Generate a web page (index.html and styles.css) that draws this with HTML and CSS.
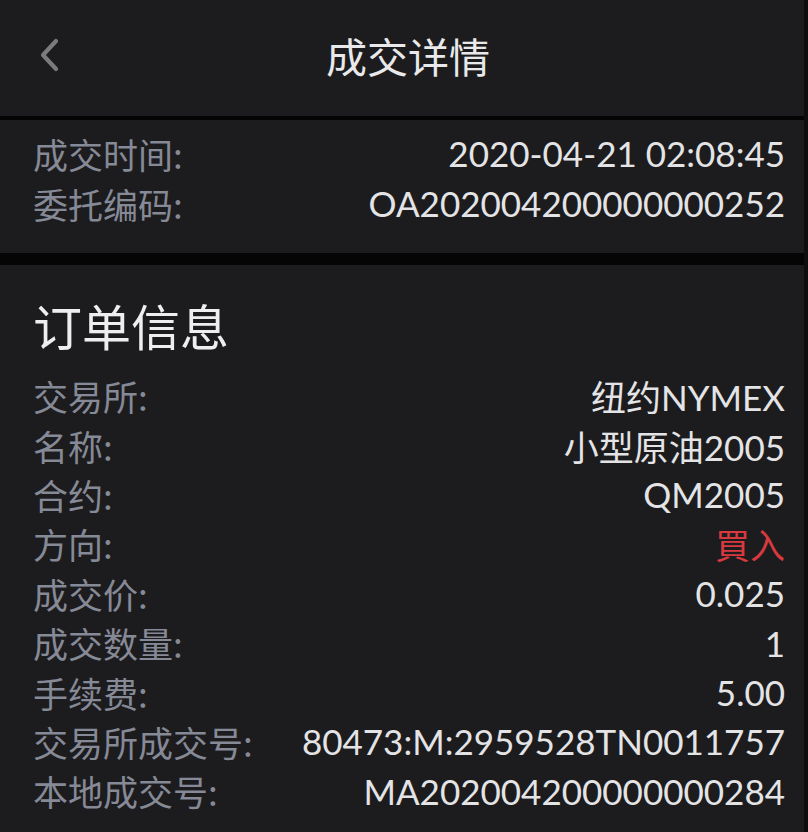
FILE: index.html
```html
<!DOCTYPE html>
<html lang="zh-CN">
<head>
<meta charset="utf-8">
<title>成交详情</title>
<link rel="stylesheet" href="styles.css">
</head>
<body>
<div class="screen">
  <header class="nav">
    <div class="nav-left">
      <svg class="back" width="24" height="34" viewBox="0 0 24 34" aria-hidden="true">
        <path d="M18 3 L5 17 L18 31" fill="none" stroke="#7b7b7d" stroke-width="4.2" stroke-linecap="round" stroke-linejoin="round"/>
      </svg>
    </div>
    <h1 class="nav-title">成交详情</h1>
    <div class="nav-right"></div>
  </header>

  <section class="card meta">
    <div class="row"><span class="label">成交时间:</span><span class="value">2020-04-21 02:08:45</span></div>
    <div class="row"><span class="label">委托编码:</span><span class="value">OA202004200000000252</span></div>
  </section>

  <section class="card order">
    <h2 class="section-title">订单信息</h2>
    <div class="rows">
      <div class="row"><span class="label">交易所:</span><span class="value">纽约NYMEX</span></div>
      <div class="row"><span class="label">名称:</span><span class="value">小型原油2005</span></div>
      <div class="row"><span class="label">合约:</span><span class="value">QM2005</span></div>
      <div class="row"><span class="label">方向:</span><span class="value buy">買入</span></div>
      <div class="row"><span class="label">成交价:</span><span class="value">0.025</span></div>
      <div class="row"><span class="label">成交数量:</span><span class="value">1</span></div>
      <div class="row"><span class="label">手续费:</span><span class="value">5.00</span></div>
      <div class="row"><span class="label">交易所成交号:</span><span class="value">80473:M:2959528TN0011757</span></div>
      <div class="row"><span class="label">本地成交号:</span><span class="value">MA202004200000000284</span></div>
    </div>
  </section>
</div>
</body>
</html>
```

FILE: styles.css
```css
* { box-sizing: border-box; }

html, body {
  margin: 0;
  padding: 0;
  background: #050505;
}

body {
  width: 808px;
  height: 832px;
  overflow: hidden;
  font-family: Lato, "Noto Sans CJK SC", "Noto Sans", sans-serif;
}

.screen {
  width: 808px;
  height: 832px;
  background: #050505;
  border-right: 4px solid #0e0e0f;
  display: flex;
  flex-direction: column;
}

.nav {
  height: 116px;
  background: #1c1c1e;
  display: grid;
  grid-template-columns: 1fr auto 1fr;
  align-items: center;
  padding: 0 0 6px 12px;
}

.nav-left {
  display: flex;
  align-items: center;
  padding-left: 26px;
}

.back { display: block; }

.nav-title {
  margin: 0;
  font-weight: 400;
  font-size: 41px;
  color: #e9e9eb;
  font-family: "Noto Sans CJK SC", sans-serif;
}

.card {
  background: #1c1c1e;
  padding: 0 19px 0 33px;
}

.meta {
  margin-top: 4px;
  height: 133px;
  padding-top: 8px;
}

.order {
  margin-top: 12px;
  flex: 1;
  padding-top: 24px;
}

.section-title {
  margin: 0 0 10px;
  height: 72px;
  line-height: 72px;
  font-weight: 400;
  font-size: 49px;
  color: #eeeef0;
  font-family: "Noto Sans CJK SC", sans-serif;
}

.row {
  display: flex;
  justify-content: space-between;
  align-items: center;
  height: 50px;
  font-size: 35px;
}

.rows .row { height: 49.4px; }

.label {
  color: #868996;
  font-family: "Noto Sans CJK SC", sans-serif;
}

.value {
  color: #e4e4e6;
  font-family: Lato, "Noto Sans CJK SC", sans-serif;
}

.value.buy {
  color: #d8393f;
  font-family: "Noto Sans CJK SC", sans-serif;
}
```
